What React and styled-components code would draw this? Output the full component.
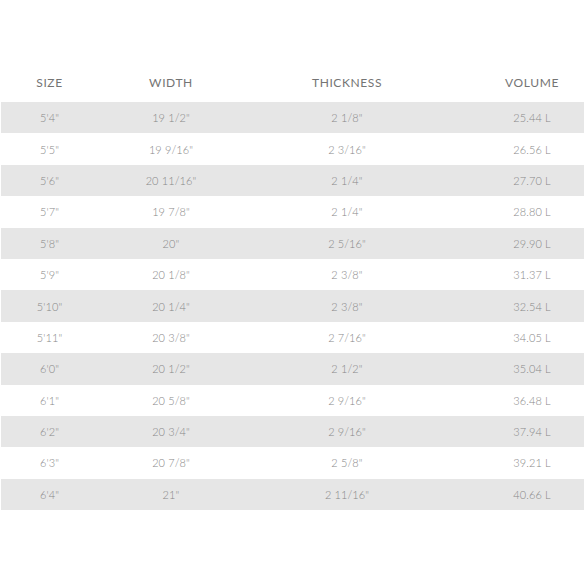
import React from 'react'
import styled, { createGlobalStyle } from 'styled-components'

const Global = createGlobalStyle`
  html, body {
    margin: 0;
    padding: 0;
    background: #fff;
    overflow: hidden;
  }
  body {
    font-family: "Lato", "Open Sans", sans-serif;
  }
`

const Table = styled.div`
  width: 600px;
  margin-left: 1px;
  padding-top: 62px;
`

const Row = styled.div`
  display: grid;
  grid-template-columns: 97px 146px 206px 150px;
  align-items: center;
  height: ${p => (p.$head ? '40px' : '31.4px')};
  background: ${p => (p.$shade ? '#e6e6e6' : 'transparent')};
`

const Cell = styled.div`
  text-align: center;
  color: ${p => (p.$head ? '#747474' : '#888')};
  font-size: ${p => (p.$head ? '12px' : '11px')};
  font-weight: ${p => (p.$head ? 400 : 300)};
  letter-spacing: ${p => (p.$head ? '0.6px' : '0.1px')};
  text-transform: uppercase;
  padding-left: ${p => p.$shift || 0}px;
`

const rows = [
  ['5\'4"', '19 1/2"', '2 1/8"', '25.44 L'],
  ['5\'5"', '19 9/16"', '2 3/16"', '26.56 L'],
  ['5\'6"', '20 11/16"', '2 1/4"', '27.70 L'],
  ['5\'7"', '19 7/8"', '2 1/4"', '28.80 L'],
  ['5\'8"', '20"', '2 5/16"', '29.90 L'],
  ['5\'9"', '20 1/8"', '2 3/8"', '31.37 L'],
  ['5\'10"', '20 1/4"', '2 3/8"', '32.54 L'],
  ['5\'11"', '20 3/8"', '2 7/16"', '34.05 L'],
  ['6\'0"', '20 1/2"', '2 1/2"', '35.04 L'],
  ['6\'1"', '20 5/8"', '2 9/16"', '36.48 L'],
  ['6\'2"', '20 3/4"', '2 9/16"', '37.94 L'],
  ['6\'3"', '20 7/8"', '2 5/8"', '39.21 L'],
  ['6\'4"', '21"', '2 11/16"', '40.66 L'],
]

const headers = ['Size', 'Width', 'Thickness', 'Volume']

const App = () => (
  <>
    <Global />
    <Table>
      <Row $head>
        {headers.map((h, j) => (
          <Cell key={h} $head $shift={j === 3 ? 14 : 0}>{h}</Cell>
        ))}
      </Row>
      {rows.map((r, i) => (
        <Row key={i} $shade={i % 2 === 0}>
          {r.map((c, j) => (
            <Cell key={j} $shift={j === 3 ? 14 : 0}>{c}</Cell>
          ))}
        </Row>
      ))}
    </Table>
  </>
)

export default App
